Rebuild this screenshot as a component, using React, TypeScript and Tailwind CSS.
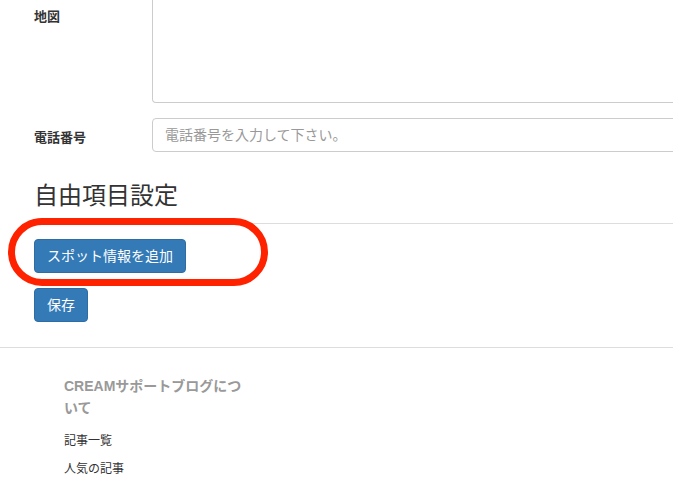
import React from 'react'

const font = { fontFamily: '"Liberation Sans", "Noto Sans CJK JP", sans-serif' }

export default function App() {
  return (
    <div
      className="relative w-[673px] h-[479px] overflow-hidden bg-white text-[#333] font-['Liberation_Sans','Noto_Sans_CJK_JP',sans-serif]"
      style={font}
    >
      {/* form fields */}
      <div className="pl-[34px]">
        <div className="flex">
          <label className="w-[118px] shrink-0 pt-[9px] text-[13px] font-bold leading-[16px]">地図</label>
          <div className="w-[600px] shrink-0 h-[103px] border border-t-0 border-[#ccc] rounded-b-[4px]" />
        </div>
        <div className="flex mt-[15px]">
          <label className="w-[118px] shrink-0 pt-[12px] text-[13px] font-bold leading-[16px]">電話番号</label>
          <input
            className="w-[600px] shrink-0 h-[34px] border border-[#ccc] rounded-[4px] px-[12px] text-[14px] placeholder:text-[#999] outline-none"
            placeholder="電話番号を入力して下さい。"
          />
        </div>
        <h2 className="mt-[31px] text-[24px] leading-[26px] font-normal">自由項目設定</h2>
      </div>

      <div className="ml-[34px] mt-[14px] border-t border-[#ddd]" />

      <div className="pl-[34px] pt-[15px] flex flex-col items-start gap-[15px]">
        <button className="h-[34px] px-[12px] bg-[#337ab7] border border-[#2e6da4] rounded-[4px] text-white text-[14px]">
          スポット情報を追加
        </button>
        <button className="h-[34px] px-[12px] bg-[#337ab7] border border-[#2e6da4] rounded-[4px] text-white text-[14px]">
          保存
        </button>
      </div>

      {/* highlight marker */}
      <div className="absolute left-[8px] top-[218px] w-[260px] h-[68px] border-[7px] border-[#ff2200] rounded-[34px]" />

      <div className="mt-[25px] border-t border-[#ddd]" />

      {/* footer */}
      <div className="pl-[64px] pt-[27px]">
        <h3 className="w-[190px] text-[14px] font-bold leading-[22px] text-[#999]">CREAMサポートブログについて</h3>
        <ul className="mt-[14px] flex flex-col gap-[12px] text-[12px] leading-[16px]">
          <li>記事一覧</li>
          <li>人気の記事</li>
        </ul>
      </div>
    </div>
  )
}
